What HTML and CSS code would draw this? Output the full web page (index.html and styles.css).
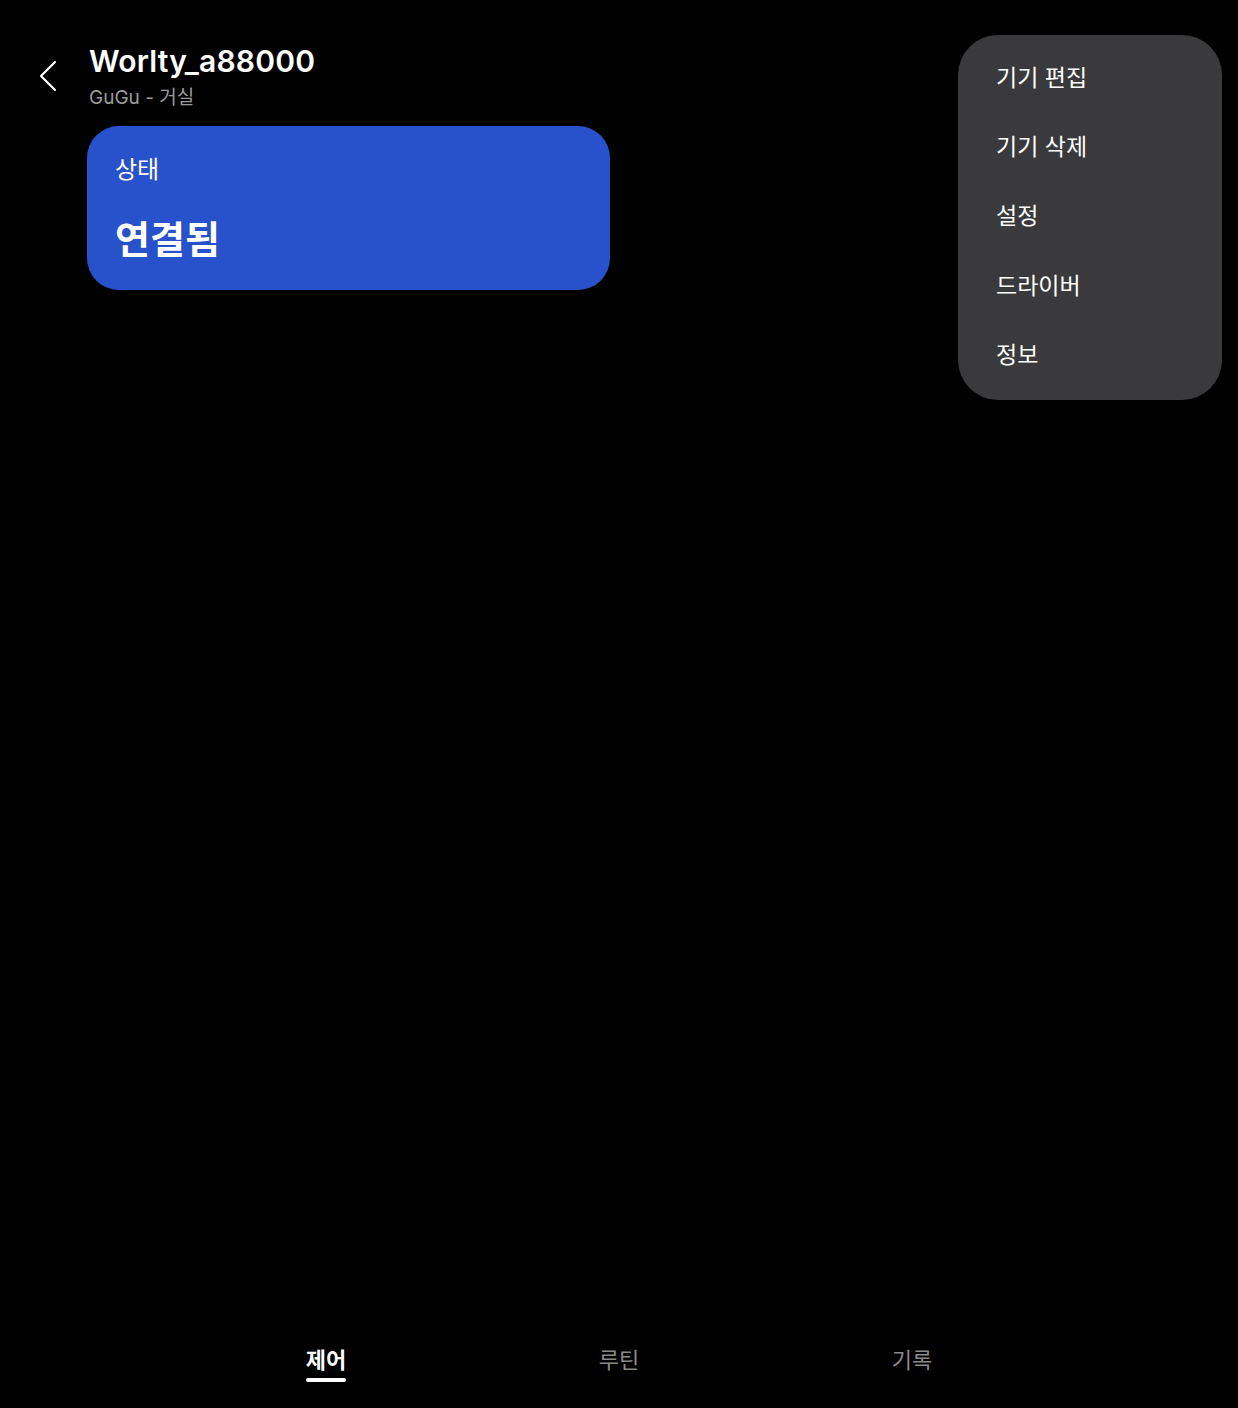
FILE: index.html
```html
<!DOCTYPE html>
<html lang="ko">
<head>
<meta charset="utf-8">
<title>Worlty_a88000</title>
<link rel="stylesheet" href="styles.css">
</head>
<body>
<div class="app">
  <header class="topbar">
    <button class="back" aria-label="뒤로">
      <svg width="20" height="34" viewBox="0 0 20 34"><path d="M16 3 L2 17 L16 31" fill="none" stroke="#ffffff" stroke-width="2.2" stroke-linecap="round" stroke-linejoin="round"/></svg>
    </button>
    <div class="titles">
      <h1 class="title">Worlty_a88000</h1>
      <p class="subtitle">GuGu - 거실</p>
    </div>
  </header>

  <main class="content">
    <section class="status-card">
      <div class="status-label">상태</div>
      <div class="status-value">연결됨</div>
    </section>
  </main>

  <nav class="tabs">
    <div class="tab active"><span class="tab-text">제어</span></div>
    <div class="tab"><span class="tab-text">루틴</span></div>
    <div class="tab"><span class="tab-text">기록</span></div>
  </nav>

  <ul class="menu">
    <li class="menu-item">기기 편집</li>
    <li class="menu-item">기기 삭제</li>
    <li class="menu-item">설정</li>
    <li class="menu-item">드라이버</li>
    <li class="menu-item">정보</li>
  </ul>
</div>
</body>
</html>
```

FILE: styles.css
```css
html, body {
  margin: 0;
  padding: 0;
  background: #000000;
}

body {
  font-family: Inter, "Noto Sans CJK KR", sans-serif;
  color: #ffffff;
}

.app {
  position: relative;
  width: 1238px;
  height: 1408px;
  display: flex;
  flex-direction: column;
  overflow: hidden;
}

.topbar {
  display: flex;
  align-items: flex-start;
  padding: 42px 0 0 39px;
}

.back {
  background: none;
  border: 0;
  padding: 0;
  margin: 17px 30px 0 0;
  width: 20px;
  height: 34px;
  display: block;
}

.back svg {
  display: block;
}

.titles {
  display: flex;
  flex-direction: column;
}

.title {
  margin: 0;
  font-family: Inter, "Noto Sans CJK KR", sans-serif;
  font-size: 30px;
  font-weight: 600;
  line-height: 38px;
  letter-spacing: 0.2px;
}

.subtitle {
  margin: 4px 0 0 0;
  font-size: 19px;
  line-height: 28px;
  color: #9c9c9c;
  font-weight: 400;
}

.content {
  padding: 14px 0 0 87px;
}

.status-card {
  width: 523px;
  height: 164px;
  box-sizing: border-box;
  background: #2851cc;
  border-radius: 32px;
  padding: 25px 28px 0 28px;
  display: flex;
  flex-direction: column;
}

.status-label {
  font-family: "Noto Sans CJK KR", sans-serif;
  font-size: 24px;
  line-height: 34px;
  font-weight: 400;
}

.status-value {
  font-family: "Noto Sans CJK KR", sans-serif;
  font-size: 38px;
  line-height: 50px;
  font-weight: 700;
  margin-top: 27px;
}

.tabs {
  margin-top: auto;
  align-self: center;
  width: 879px;
  display: grid;
  grid-template-columns: repeat(3, 1fr);
  padding-bottom: 35px;
}

.tab {
  display: flex;
  justify-content: center;
}

.tab-text {
  position: relative;
  font-family: "Noto Sans CJK KR", sans-serif;
  font-size: 22px;
  line-height: 30px;
  color: #8a8a8a;
}

.tab.active .tab-text {
  color: #ffffff;
  font-weight: 700;
}

.tab.active .tab-text::after {
  content: "";
  position: absolute;
  left: 0;
  right: 0;
  bottom: -9px;
  height: 4px;
  border-radius: 2px;
  background: #ffffff;
}

.menu {
  position: absolute;
  left: 958px;
  top: 35px;
  width: 264px;
  height: 365px;
  box-sizing: border-box;
  margin: 0;
  padding: 6px 0 12px 0;
  list-style: none;
  background: #3a3a3c;
  border-radius: 40px;
}

.menu-item {
  height: 69.4px;
  display: flex;
  align-items: center;
  padding-left: 38px;
  font-family: "Noto Sans CJK KR", sans-serif;
  font-size: 23px;
  color: #ffffff;
}
```
